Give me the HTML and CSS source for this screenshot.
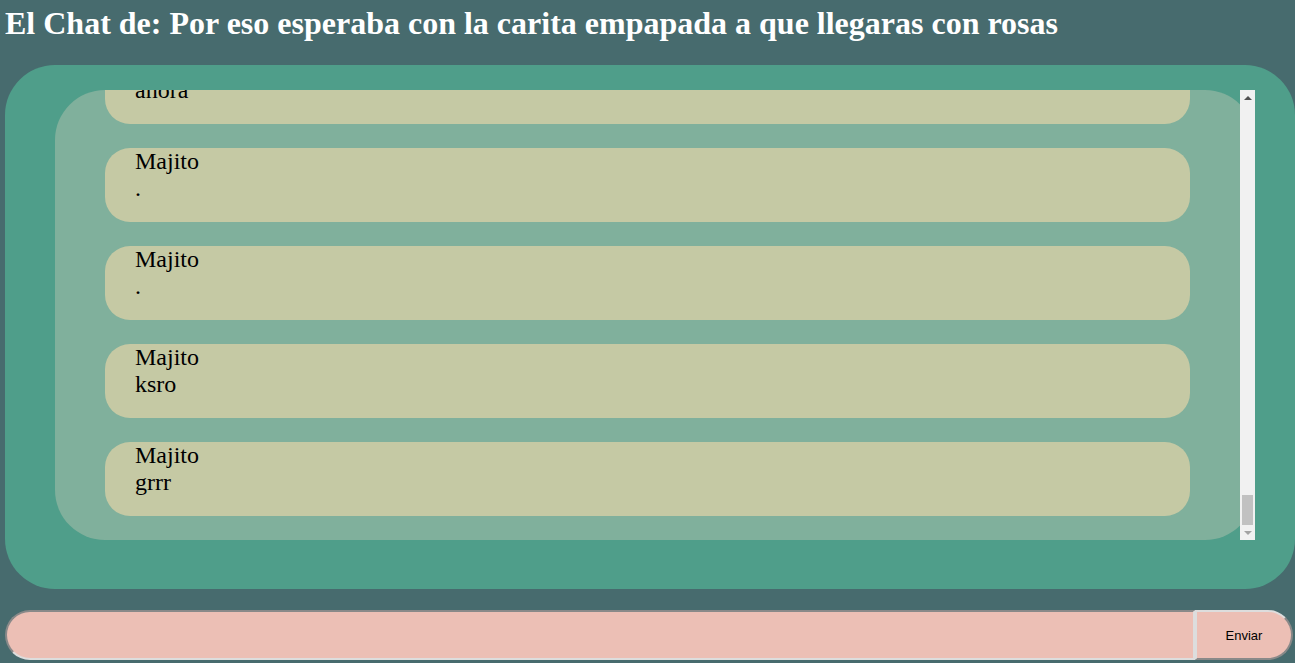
FILE: index.html
```html
<!DOCTYPE html>
<html lang="es">
<head>
<meta charset="utf-8">
<title>El Chat</title>
<link rel="stylesheet" href="styles.css">
</head>
<body>
<h1 class="title">El Chat de: Por eso esperaba con la carita empapada a que llegaras con rosas</h1>
<div class="chat">
  <div class="viewport">
    <div class="messages">
      <div class="list">
        <div class="msg"><div>Majito</div><div>hola</div></div>
        <div class="msg"><div>Carlos</div><div>hola majo</div></div>
        <div class="msg"><div>Majito</div><div>que haces</div></div>
        <div class="msg"><div>Carlos</div><div>nada y tu</div></div>
        <div class="msg"><div>Majito</div><div>aqui</div></div>
        <div class="msg"><div>Carlos</div><div>jaja</div></div>
        <div class="msg"><div>Majito</div><div>ya comiste?</div></div>
        <div class="msg"><div>Carlos</div><div>si</div></div>
        <div class="msg"><div>Majito</div><div>que comiste</div></div>
        <div class="msg"><div>Carlos</div><div>tacos</div></div>
        <div class="msg"><div>Majito</div><div>que rico</div></div>
        <div class="msg"><div>Carlos</div><div>y tu?</div></div>
        <div class="msg"><div>Majito</div><div>todavia no</div></div>
        <div class="msg"><div>Carlos</div><div>ok</div></div>
        <div class="msg"><div>Majito</div><div>oye</div></div>
        <div class="msg"><div>Carlos</div><div>dime</div></div>
        <div class="msg"><div>Majito</div><div>escuchaste la cancion</div></div>
        <div class="msg"><div>Carlos</div><div>cual</div></div>
        <div class="msg"><div>Majito</div><div>la de las rosas</div></div>
        <div class="msg"><div>Carlos</div><div>si</div></div>
        <div class="msg"><div>Majito</div><div>esta bonita</div></div>
        <div class="msg"><div>Carlos</div><div>mucho</div></div>
        <div class="msg"><div>Majito</div><div>jajaja</div></div>
        <div class="msg"><div>Carlos</div><div>que</div></div>
        <div class="msg"><div>Majito</div><div>nada</div></div>
        <div class="msg"><div>Carlos</div><div>ok</div></div>
        <div class="msg"><div>Majito</div><div>ya me voy</div></div>
        <div class="msg"><div>Carlos</div><div>a donde</div></div>
        <div class="msg"><div>Majito</div><div>a la escuela</div></div>
        <div class="msg"><div>Carlos</div><div>cuidate</div></div>
        <div class="msg"><div>Majito</div><div>gracias</div></div>
        <div class="msg"><div>Carlos</div><div>bye</div></div>
        <div class="msg"><div>Majito</div><div>ya llegue</div></div>
        <div class="msg"><div>Carlos</div><div>que bien</div></div>
        <div class="msg"><div>Majito</div><div>estoy cansada</div></div>
        <div class="msg"><div>Carlos</div><div>descansa</div></div>
        <div class="msg"><div>Majito</div><div>si</div></div>
        <div class="msg"><div>Carlos</div><div>hablamos luego</div></div>
        <div class="msg"><div>Majito</div><div>ok</div></div>
        <div class="msg"><div>Carlos</div><div>hola</div></div>
        <div class="msg"><div>Majito</div><div>holi</div></div>
        <div class="msg"><div>Carlos</div><div>como estas</div></div>
        <div class="msg"><div>Majito</div><div>bien</div></div>
        <div class="msg"><div>Carlos</div><div>me alegro</div></div>
        <div class="msg"><div>Majito</div><div>y tu</div></div>
        <div class="msg"><div>Carlos</div><div>bien tambien</div></div>
        <div class="msg"><div>Majito</div><div>que bueno</div></div>
        <div class="msg"><div>Carlos</div><div>si</div></div>
        <div class="msg"><div>Majito</div><div>hmm</div></div>
        <div class="msg"><div>Carlos</div><div>que pasa</div></div>
        <div class="msg"><div>Majito</div><div>nada</div></div>
        <div class="msg"><div>Carlos</div><div>seguro?</div></div>
        <div class="msg"><div>Majito</div><div>si</div></div>
        <div class="msg"><div>Carlos</div><div>ok</div></div>
        <div class="msg"><div>Majito</div><div>jaja</div></div>
        <div class="msg"><div>Carlos</div><div>que haces</div></div>
        <div class="msg"><div>Majito</div><div>nada</div></div>
        <div class="msg"><div>Carlos</div><div>y ahora</div></div>
        <div class="msg"><div>Majito</div><div>ahora</div></div>
        <div class="msg"><div>Majito</div><div>.</div></div>
        <div class="msg"><div>Majito</div><div>.</div></div>
        <div class="msg"><div>Majito</div><div>ksro</div></div>
        <div class="msg"><div>Majito</div><div>grrr</div></div>
      </div>
    </div>
    <div class="scrollbar" aria-hidden="true">
      <div class="sb-btn"><span class="arrow-up"></span></div>
      <div class="sb-track"><div class="sb-thumb"></div></div>
      <div class="sb-btn"><span class="arrow-down"></span></div>
    </div>
  </div>
</div>
<form class="send">
  <input class="field" type="text" name="mensaje">
  <button class="btn" type="button">Enviar</button>
</form>
</body>
</html>
```

FILE: styles.css
```css
body {
  margin: 5px 0 0 5px;
  background: #476B6E;
  font-family: "Liberation Serif", serif;
}

.title {
  margin: 0;
  font-size: 32px;
  line-height: 37px;
  font-weight: bold;
  color: #ffffff;
}

.chat {
  margin-top: 23px;
  background: #4F9E8A;
  border-radius: 50px;
  padding: 25px 40px 49px 50px;
  height: 450px;
}

.viewport {
  position: relative;
  height: 450px;
}

.messages {
  height: 450px;
  overflow-y: scroll;
  background: #80B09C;
  border-radius: 50px;
  display: flex;
  flex-direction: column-reverse;
  scrollbar-width: none;
}

.list {
  padding: 24px 65px 24px 50px;
  display: flex;
  flex-direction: column;
  gap: 24px;
}

.msg {
  flex: none;
  background: #C5C9A4;
  border-radius: 25px;
  padding: 0 30px 20px;
  font-size: 24px;
  line-height: 27px;
  color: #000000;
}

.scrollbar {
  position: absolute;
  top: 0;
  right: 0;
  width: 15px;
  height: 450px;
  background: #F1F1F1;
  display: flex;
  flex-direction: column;
}

.sb-btn {
  height: 15px;
  flex: none;
  display: flex;
  align-items: center;
  justify-content: center;
}

.arrow-up {
  width: 0;
  height: 0;
  border-left: 4px solid transparent;
  border-right: 4px solid transparent;
  border-bottom: 4px solid #505050;
}

.arrow-down {
  width: 0;
  height: 0;
  border-left: 4px solid transparent;
  border-right: 4px solid transparent;
  border-top: 4px solid #A3A3A3;
}

.sb-track {
  flex: 1;
  display: flex;
  flex-direction: column;
  justify-content: flex-end;
}

.sb-thumb {
  height: 30px;
  margin: 0 2px;
  background: #C1C1C1;
}

.send {
  margin: 21px 0 0 0;
  display: flex;
}

.field {
  box-sizing: border-box;
  width: 1190px;
  height: 50px;
  margin: 0;
  padding: 0 20px;
  border: 2px inset #dddddd;
  border-radius: 25px 0 0 25px;
  background: #ECBFB5;
}

.btn {
  box-sizing: border-box;
  width: 98px;
  height: 50px;
  margin: 0;
  border: 2px outset #dddddd;
  border-radius: 0 25px 25px 0;
  background: #ECBFB5;
  color: #000000;
  font: 13px "Liberation Sans", Arial, sans-serif;
}
```
